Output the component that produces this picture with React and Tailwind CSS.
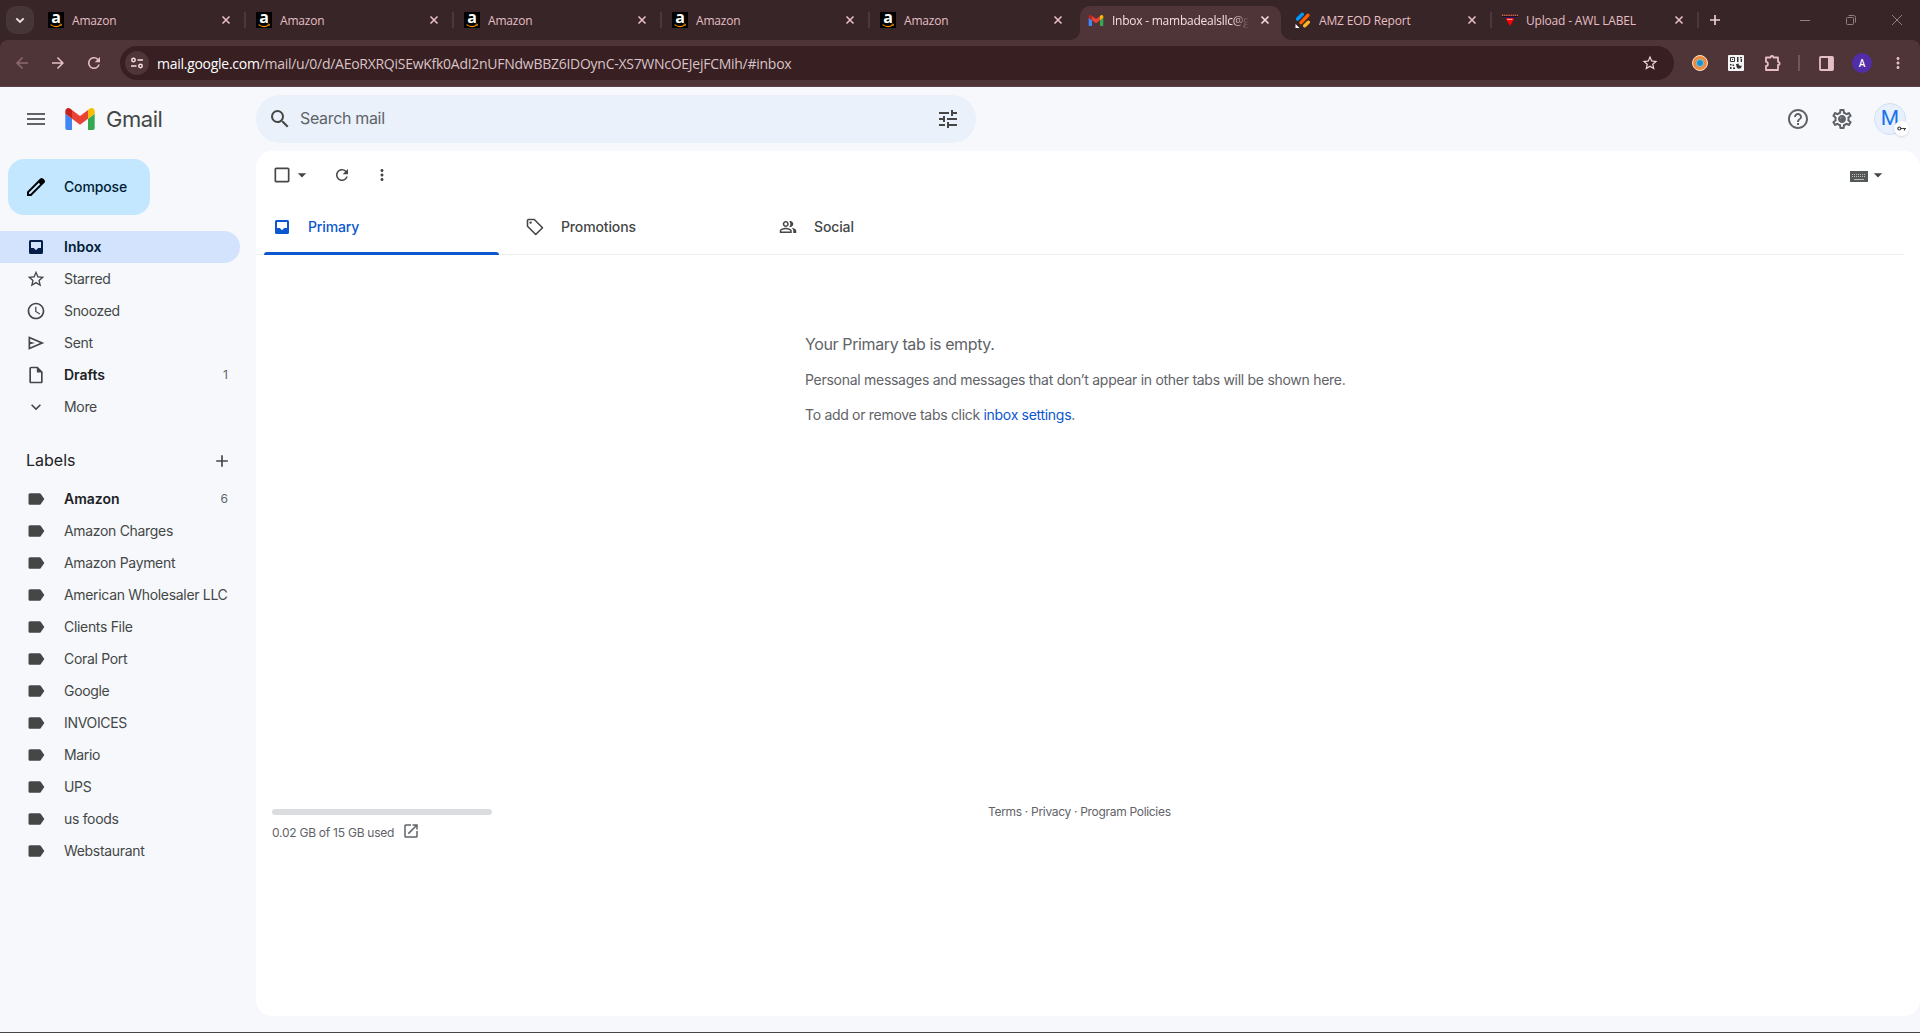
import React from 'react';
import {
  MdMenu, MdSearch, MdTune, MdHelpOutline, MdOutlineSettings, MdStarBorder, MdAccessTime,
  MdExpandMore, MdAdd, MdLabel, MdOutlinePeopleAlt, MdRefresh, MdMoreVert, MdOpenInNew,
  MdArrowDropDown, MdOutlineInsertDriveFile, MdCheckBoxOutlineBlank, MdArrowBack, MdArrowForward,
} from 'react-icons/md';

const AmazonIcon = () => (
  <span className="relative flex h-4 w-4 shrink-0 justify-center bg-black">
    <span className="font-['Open_Sans',sans-serif] text-[16px] leading-[10px] font-bold text-white">a</span>
    <svg className="absolute inset-0 h-4 w-4" viewBox="0 0 16 16" fill="none">
      <path d="M2.500 12.600c3.200 2.300 7.500 2.300 10.300.4" stroke="#f90" strokeWidth="1.100" />
      <path d="M11.500 12.200l2-.1-.4 1.800" stroke="#f90" strokeWidth=".8" />
    </svg>
  </span>
);

const GmailIcon = ({ className }) => (
  <svg className={className} viewBox="52 42 88 66">
    <path fill="#4285f4" d="M58 108h14V74L52 59v43c0 3.320 2.690 6 6 6" />
    <path fill="#34a853" d="M120 108h14c3.320 0 6-2.690 6-6V59l-20 15" />
    <path fill="#fbbc04" d="M120 48v26l20-15v-8c0-7.420-8.470-11.650-14.400-7.200" />
    <path fill="#ea4335" d="M72 74V48l24 18 24-18v26L96 92" />
    <path fill="#c5221f" d="M52 51v8l20 15V48l-5.600-4.200c-5.940-4.450-14.400-.22-14.400 7.200" />
  </svg>
);

const JotformIcon = () => (
  <svg className="h-4 w-4 shrink-0" viewBox="0 0 16 16" strokeWidth="3.400" strokeLinecap="round">
    <path d="M2.600 7L7.300 2.200" stroke="#0099ff" />
    <path d="M6 10.600l7-7.400" stroke="#ff6100" />
    <path d="M9.700 13.800l3.600-3.500" stroke="#ffb629" />
    <path d="M.5 12v4h4z" fill="#fff" />
  </svg>
);

const AwlIcon = () => (
  <svg className="h-4 w-4 shrink-0" viewBox="0 0 16 16">
    <path d="M0 2h16v3H0z" fill="#2a0d18" />
    <path d="M0 3.300h16" stroke="#c7704f" strokeWidth="1.400" strokeDasharray="1.500 .6" />
    <path d="M2.500 5h11l-1.300 2H4z" fill="#221a66" />
    <path d="M3.500 6.200h9L8 14z" fill="#f00" />
    <path d="M5 7.300h5.500" stroke="#ffb3b3" />
  </svg>
);

const TabClose = ({ active }) => (
  <svg className={`h-4 w-4 shrink-0 ${active ? 'text-[#f5dfe1]' : 'text-[#e5bfc5]'}`} viewBox="0 0 16 16">
    <path d="M4.500 4.500l7 7M11.500 4.500l-7 7" stroke="currentColor" strokeWidth="1.600" />
  </svg>
);

const Tab = ({ icon, title, separator = true, width = 'w-[208px]', pad = 'pl-3' }) => (
  <div className={`flex h-10 shrink-0 items-center ${width} ${pad}`}>
    {icon}
    <span className="ml-2 flex-1 overflow-hidden pt-[2px] text-[12px] tracking-[-0.18px] whitespace-nowrap text-[#e5bfc5]">{title}</span>
    <TabClose />
    <span className={`-mr-[2px] ml-[10px] h-4 w-[2px] ${separator ? 'bg-[#4d373a]' : ''}`} />
  </div>
);

const TabStrip = () => (
  <div className="flex h-10 items-center bg-[#382527]">
    <div className="ml-[6px] flex h-7 w-7 shrink-0 items-center justify-center rounded-[10px] bg-[#463638]">
      <svg className="h-4 w-4" viewBox="0 0 16 16" fill="none">
        <path d="M4.300 6.300L8 10l3.700-3.700" stroke="#f5dfe1" strokeWidth="1.900" />
      </svg>
    </div>
    <div className="ml-[2px] flex">
      {[0, 1, 2, 3, 4].map((i) => (
        <Tab key={i} icon={<AmazonIcon />} title="Amazon" separator={i < 4} />
      ))}
    </div>
    <div className="relative ml-[4px] flex h-[34px] w-[201px] shrink-0 items-center self-end rounded-t-[10px] bg-[#4f3438] pb-[6px] pl-2">
      <svg className="absolute bottom-0 -left-[10px] h-[10px] w-[10px]" viewBox="0 0 10 10">
        <path d="M10 0v10H0A10 10 0 0010 0" fill="#4f3438" />
      </svg>
      <svg className="absolute -right-[10px] bottom-0 h-[10px] w-[10px]" viewBox="0 0 10 10">
        <path d="M0 0v10h10A10 10 0 010 0" fill="#4f3438" />
      </svg>
      <GmailIcon className="h-[11px] w-4 shrink-0" />
      <span className="ml-2 w-[137px] mask-r-from-88% pt-[2px] text-[12px] tracking-[-0.24px] whitespace-nowrap text-[#f5dfe1]">Inbox - mambadealsllc@g</span>
      <span className="ml-2"><TabClose active /></span>
    </div>
    <Tab icon={<JotformIcon />} title="AMZ EOD Report" width="w-[209px]" pad="pl-[14px]" />
    <Tab icon={<AwlIcon />} title="Upload - AWL LABEL" width="w-[207px]" pad="pl-[12px]" />
    <svg className="ml-[10px] h-4 w-4 text-[#e8cfd2]" viewBox="0 0 16 16">
      <path d="M8 3v10M3 8h10" stroke="currentColor" strokeWidth="1.700" />
    </svg>
    <div className="mr-[18px] ml-auto flex items-center gap-9 text-[#8f8183]">
      <svg className="h-[10px] w-[10px]" viewBox="0 0 10 10"><path d="M0 5.500h10" stroke="currentColor" /></svg>
      <svg className="h-[10px] w-[10px]" viewBox="0 0 10 10" fill="none" stroke="currentColor">
        <rect x=".5" y="2.500" width="7" height="7" rx="1" />
        <path d="M2.500.5h5a2 2 0 012 2v5" />
      </svg>
      <svg className="h-[10px] w-[10px]" viewBox="0 0 10 10" stroke="currentColor"><path d="M0 0l10 10M10 0L0 10" /></svg>
    </div>
  </div>
);

const AddressBar = () => (
  <div className="bg-[#382527]">
    <div className="flex h-[47px] items-center rounded-t-[8px] border-b border-[#594144] bg-[#4f3438] text-[#e5bfc5]">
      <MdArrowBack className="ml-[13px] h-[18px] w-[18px] text-[#8f6a70]" />
      <MdArrowForward className="ml-[18px] h-[18px] w-[18px]" />
      <MdRefresh className="ml-[18px] h-[18px] w-[18px]" />
      <div className="ml-[17px] flex h-[34px] w-[1554px] items-center rounded-full bg-[#371f22] pr-[15px] pl-[5px]">
        <span className="flex h-6 w-6 items-center justify-center rounded-full bg-[#4f3438]">
          <svg className="h-[14px] w-[14px]" viewBox="0 0 14 14" fill="none" stroke="#f5dfe1" strokeWidth="1.500">
            <circle cx="3.500" cy="4" r="1.700" />
            <path d="M7.500 4h5.500M1 10h5.500" />
            <circle cx="10.500" cy="10" r="1.700" />
          </svg>
        </span>
        <span className="ml-2 text-[14px] tracking-[-0.27px] whitespace-nowrap text-[#d9c3c6]">
          <span className="text-white">mail.google.com</span>/mail/u/0/d/AEoRXRQiSEwKfk0AdI2nUFNdwBBZ6IDOynC-XS7WNcOEJejFCMih/#inbox
        </span>
        <MdStarBorder className="ml-auto h-[18px] w-[18px] text-[#f0dadd]" />
      </div>
      <span className="ml-[18px] flex h-4 w-4 items-center justify-center rounded-full border border-[#fde0c8] bg-[#f28a3c]">
        <span className="h-[8px] w-[8px] rounded-full border border-[#7ec7dc] bg-[#1690cf]" />
      </span>
      <svg className="ml-5 h-4 w-4" viewBox="0 0 16 16">
        <rect width="16" height="16" rx="1" fill="#f4f4f4" />
        <path d="M2.500 2.500h4v4h-4z" fill="none" stroke="#333" />
        <path d="M9 2h1.500v5H9zM12 2h2v1.200h-2zM12.500 4H14v3h-1.200zM4 4h1v1H4zM2 9h1.500v1.500H2zM4.500 9.500H6V11H4.500zM2 12h1.500v2H2zM5 12.500h2V14H5zM8 9h1v1H8zM13.500 10.500a2.600 2.600 0 11-3-2 2 2 0 003 2z" fill="#333" />
      </svg>
      <svg className="ml-5 h-[18px] w-[18px]" viewBox="0 0 18 18" fill="none" stroke="currentColor" strokeWidth="1.800" strokeLinejoin="round">
        <path d="M2 3.500h4.500a1.500 1.500 0 013 0H14v4.300a1.600 1.600 0 010 3.200v5H2v-4c2.600 0 2.600-4.200 0-4.200z" />
      </svg>
      <span className="ml-4 h-4 w-[2px] bg-[#74555a]" />
      <svg className="ml-[19px] h-[15px] w-[15px]" viewBox="0 0 15 15">
        <rect x="1" y="1" width="13" height="13" rx=".8" fill="none" stroke="currentColor" strokeWidth="1.800" />
        <path d="M9 1h5v13H9z" fill="currentColor" />
      </svg>
      <span className="ml-[18px] flex h-5 w-5 items-center justify-center rounded-full bg-[#512da8] font-[Roboto,sans-serif] text-[10px] font-medium text-white">A</span>
      <MdMoreVert className="ml-[17px] h-[18px] w-[18px]" />
    </div>
  </div>
);

const Header = () => (
  <header className="flex h-16 items-center text-[#5f6368]">
    <MdMenu className="ml-6 h-6 w-6" />
    <GmailIcon className="ml-[17px] h-[22px] w-[30px]" />
    <span className="ml-[11px] w-[150px] text-[22px] tracking-[-0.45px] text-[#444746]">Gmail</span>
    <div className="flex h-12 w-[720px] items-center rounded-full bg-[#eaf1fb] text-[#444746]">
      <MdSearch className="ml-3 h-6 w-6" />
      <span className="ml-2 pb-[3px] text-[16px] tracking-[-0.33px] text-[#5f6368]">Search mail</span>
      <MdTune className="mr-4 mb-px ml-auto h-6 w-6" />
    </div>
    <MdHelpOutline className="ml-auto h-6 w-6" />
    <span className="relative ml-5 flex h-6 w-6 items-center justify-center">
      <MdOutlineSettings className="h-6 w-6" />
      <span className="absolute h-[5px] w-[5px] rounded-full bg-[#5f6368]" />
    </span>
    <div className="relative mr-[14px] ml-5 flex h-8 w-8 items-center justify-center rounded-full border border-[#d2dff3] bg-[#e8f0fe] font-[Roboto,sans-serif] text-[21px] text-[#1a73e8]">
      M
      <span className="absolute top-[17px] left-[19px] flex h-[15px] w-[15px] items-center justify-center rounded-full bg-white shadow">
        <svg className="h-[9px] w-[9px]" viewBox="0 0 9 9" fill="none" stroke="#3c4043" strokeWidth="1.200">
          <circle cx="2.300" cy="4.500" r="1.500" />
          <path d="M4 4.500h5M7.500 4.500v2" />
        </svg>
      </span>
    </div>
  </header>
);

const InboxIcon = ({ className }) => (
  <svg className={className} viewBox="0 0 20 20" fill="currentColor" fillRule="evenodd">
    <path d="M4.500 3h11A1.500 1.500 0 0117 4.500v11a1.500 1.500 0 01-1.500 1.500h-11A1.500 1.500 0 013 15.500v-11A1.500 1.500 0 014.500 3zM5 5v6h3l1 1.500q1 .7 2 0L12 11h3V5z" />
  </svg>
);

const SendIcon = ({ className }) => (
  <svg className={className} viewBox="0 -960 960 960" fill="currentColor">
    <path d="M120-160v-640l760 320-760 320zm80-120l474-200-474-200v140l240 60-240 60v140zm0 0v-400 400z" />
  </svg>
);

const folders = [
  { name: 'Inbox', icon: InboxIcon, active: true, bold: true },
  { name: 'Starred', icon: MdStarBorder },
  { name: 'Snoozed', icon: MdAccessTime },
  { name: 'Sent', icon: SendIcon },
  { name: 'Drafts', icon: MdOutlineInsertDriveFile, bold: true, count: 1 },
  { name: 'More', icon: MdExpandMore },
];

const labels = [
  { name: 'Amazon', bold: true, count: 6 },
  { name: 'Amazon Charges' },
  { name: 'Amazon Payment' },
  { name: 'American Wholesaler LLC' },
  { name: 'Clients File' },
  { name: 'Coral Port' },
  { name: 'Google' },
  { name: 'INVOICES' },
  { name: 'Mario' },
  { name: 'UPS' },
  { name: 'us foods' },
  { name: 'Webstaurant' },
];

const NavItem = ({ name, icon: Icon = MdLabel, active, bold, count }) => (
  <div
    className={`flex h-8 w-60 items-center rounded-r-full pr-3 pl-[26px] text-[14px] ${
      active ? 'bg-[#d3e3fd] text-[#001d35]' : bold ? 'text-[#202124]' : 'text-[#444746]'
    } ${bold ? 'font-semibold' : 'tracking-[-0.32px]'}`}
  >
    <Icon className={`h-5 w-5 shrink-0 ${active ? 'text-[#041e49]' : 'text-[#444746]'}`} />
    <span className="ml-[18px] pb-px whitespace-nowrap">{name}</span>
    {count && <span className="ml-auto text-[12px] font-normal text-[#5f6368]">{count}</span>}
  </div>
);

const Sidebar = () => (
  <aside className="w-64 shrink-0">
    <div className="mt-2 mb-4 ml-2 flex h-14 w-[142px] items-center rounded-2xl bg-[#c2e7ff] pl-4 text-[#001d35]">
      <svg className="h-6 w-6" viewBox="0 -960 960 960" fill="#000">
        <path d="M200-200h57l391-391-57-57-391 391v57zm-80 80v-170l528-527q12-11 26.500-17t30.500-6q16 0 31 6t26 18l55 56q12 11 17.500 26t5.500 30q0 16-5.500 30.500T817-647L290-120H120z" />
      </svg>
      <span className="ml-4 pb-px text-[14px] font-medium tracking-[-0.15px]">Compose</span>
    </div>
    {folders.map((item) => <NavItem key={item.name} {...item} />)}
    <div className="mt-[21px] mb-[5px] flex h-[34px] w-60 items-center pr-2 pl-[26px] text-[#202124]">
      <span className="pb-[2px] text-[16px]">Labels</span>
      <MdAdd className="ml-auto h-5 w-5 text-[#444746]" />
    </div>
    {labels.map((item) => <NavItem key={item.name} {...item} />)}
  </aside>
);

const TagIcon = ({ className }) => (
  <svg className={className} viewBox="0 0 20 20" fill="none" stroke="currentColor" strokeWidth="1.600">
    <path d="M2.500 3.300v6l8.200 8.200 6.800-6.800-8.200-8.200h-6z" strokeLinejoin="round" />
    <circle cx="5.600" cy="5.600" r="1.200" fill="currentColor" stroke="none" />
  </svg>
);

const MailTab = ({ icon: Icon, title, active }) => (
  <div className={`relative flex h-14 w-[253px] items-center pl-2 text-[14px] ${active ? 'text-[#0b57d0]' : 'text-[#444746]'}`}>
    <span className="flex h-5 w-5 items-center justify-center">
      <Icon className={title === 'Social' ? 'h-[18px] w-[18px]' : 'h-5 w-5'} />
    </span>
    <span className="ml-4 pb-px font-medium tracking-[-0.13px]">{title}</span>
    {active && <span className="absolute bottom-0 left-0 h-[3px] w-[235px] rounded-t-[3px] bg-[#0b57d0]" />}
  </div>
);

const MailPanel = () => (
  <main className="mb-4 flex flex-1 flex-col rounded-2xl bg-white text-[#5f6368]">
    <div className="flex h-12 items-center text-[#444746]">
      <MdCheckBoxOutlineBlank className="ml-4 h-5 w-5" />
      <MdArrowDropDown className="h-5 w-5" />
      <MdRefresh className="ml-[21px] h-[18px] w-[18px]" />
      <MdMoreVert className="ml-[22px] h-[18px] w-[18px]" />
      <svg className="mt-[3px] ml-auto h-[11px] w-[18px]" viewBox="0 0 18 11">
        <rect width="18" height="11" fill="#555859" />
        <path d="M2 3.500h14M2 5.500h14" stroke="#bbb" strokeDasharray="1 1" />
        <path d="M4 8.500h10" stroke="#bbb" />
      </svg>
      <MdArrowDropDown className="mr-8 h-5 w-5" />
    </div>
    <div className="flex h-14 pl-2 shadow-[inset_0_-1px_0_#eceff1] mr-4">
      <MailTab icon={InboxIcon} title="Primary" active />
      <MailTab icon={TagIcon} title="Promotions" />
      <MailTab icon={MdOutlinePeopleAlt} title="Social" />
    </div>
    <div className="mt-[77px] ml-[549px] whitespace-nowrap">
      <p className="text-[16px] leading-6 tracking-[-0.38px]">Your Primary tab is empty.</p>
      <p className="mt-[14px] text-[14px] leading-5 tracking-[-0.28px]">Personal messages and messages that don’t appear in other tabs will be shown here.</p>
      <p className="mt-[15px] text-[14px] leading-5 tracking-[-0.3px]">
        To add or remove tabs click <a className="text-[#0b57d0]">inbox settings</a>.
      </p>
    </div>
    <footer className="mt-[379px] flex text-[12px] leading-4 tracking-[-0.31px]">
      <div className="ml-4 w-[716px]">
        <div className="mt-[5px] h-[6px] w-[220px] rounded-full bg-[#dadce0]" />
        <div className="mt-1 flex h-7 items-center">
          <span className="tracking-[-0.25px]">0.02 GB of 15 GB used</span>
          <MdOpenInNew className="mb-1 ml-2 h-[18px] w-[18px]" />
        </div>
      </div>
      <span>Terms · Privacy · Program Policies</span>
    </footer>
  </main>
);

const App = () => (
  <div className="flex h-[1033px] w-[1920px] flex-col overflow-hidden bg-[#f6f8fc] font-['Open_Sans','Noto_Sans',sans-serif]">
    <TabStrip />
    <AddressBar />
    <div className="flex flex-1 flex-col border-b border-[#444] font-[Inter,Roboto,sans-serif]">
      <Header />
      <div className="flex flex-1">
        <Sidebar />
        <MailPanel />
      </div>
    </div>
  </div>
);

export default App;
